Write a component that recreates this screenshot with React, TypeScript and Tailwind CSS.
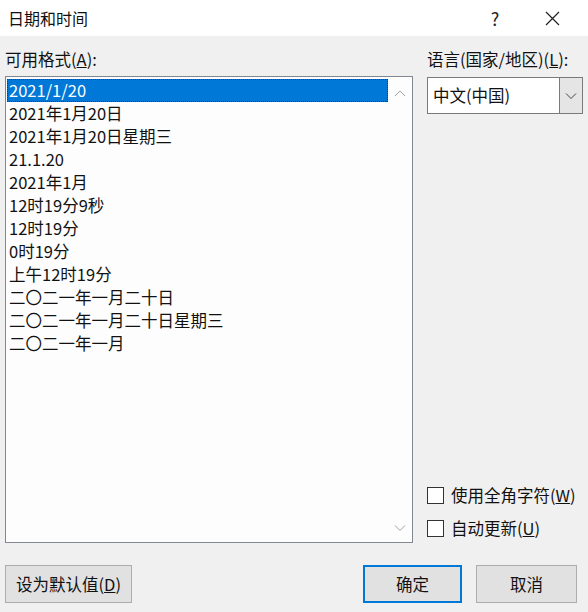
import React, { useState } from 'react';

const formats = [
  '2021/1/20',
  '2021年1月20日',
  '2021年1月20日星期三',
  '21.1.20',
  '2021年1月',
  '12时19分9秒',
  '12时19分',
  '0时19分',
  '上午12时19分',
  '二〇二一年一月二十日',
  '二〇二一年一月二十日星期三',
  '二〇二一年一月',
];

const Chevron: React.FC<{ up?: boolean; className?: string }> = ({ up, className }) => (
  <svg width="12" height="8" viewBox="0 0 12 8" className={className}>
    <path d={up ? 'M1 7 L6 2 L11 7' : 'M1 1.5 L6 6.5 L11 1.5'} fill="none" stroke="currentColor" strokeWidth="1" />
  </svg>
);

const Check: React.FC<{ label: string; keyChar: string }> = ({ label, keyChar }) => (
  <label className="flex items-center gap-[7px] h-[17px]">
    <span className="w-[17px] h-[17px] border border-[#333] bg-white shrink-0" />
    <span>
      {label}(<span className="underline">{keyChar}</span>)
    </span>
  </label>
);

const App: React.FC = () => {
  const [selected, setSelected] = useState(0);

  return (
    <div
      className="w-[588px] h-[612px] bg-[#f0f0f0] text-[16.5px] text-[#111] flex flex-col overflow-hidden"
      style={{ fontFamily: '"Noto Sans CJK SC", "Noto Sans", sans-serif' }}
    >
      {/* title bar */}
      <div className="h-[36px] bg-white flex items-center shrink-0">
        <span className="pl-[8px] flex-1 text-[16px] leading-[20px]">日期和时间</span>
        <span className="w-[62px] text-center text-[18px] text-[#222]">?</span>
        <span className="w-[62px] flex justify-center pr-[10px]">
          <svg width="15" height="15" viewBox="0 0 15 15">
            <path d="M1 1 L14 14 M14 1 L1 14" stroke="#222" strokeWidth="1.2" />
          </svg>
        </span>
      </div>

      <div className="flex px-[5px] pt-[12px] gap-[14px]">
        {/* formats */}
        <div className="w-[408px] flex flex-col">
          <div className="h-[28px] leading-[22px]">
            可用格式(<span className="underline">A</span>):
          </div>
          <div className="h-[467px] border border-[#828790] bg-[#fdfdfd] flex">
            <div className="flex-1 pl-[1px] pt-[2px]">
              {formats.map((f, i) => (
                <div
                  key={f}
                  onClick={() => setSelected(i)}
                  className={`h-[23px] leading-[23px] pl-[2px] whitespace-nowrap ${
                    i === selected ? 'bg-[#0078d7] text-white outline-1 outline-dotted outline-[#333] -outline-offset-1' : ''
                  }`}
                >
                  {f}
                </div>
              ))}
            </div>
            <div className="w-[24px] flex flex-col items-center justify-between pt-[12px] pb-[10px] text-[#a0a0a0]">
              <Chevron up />
              <Chevron />
            </div>
          </div>
        </div>

        {/* language */}
        <div className="flex-1 flex flex-col">
          <div className="h-[29px] leading-[22px] whitespace-nowrap">
            语言(国家/地区)(<span className="underline">L</span>):
          </div>
          <div className="h-[37px] border border-[#7a7a7a] bg-white flex">
            <div className="flex-1 pl-[5px] leading-[35px]">中文(中国)</div>
            <div className="w-[23px] bg-[#e5e5e5] border-l border-[#7a7a7a] flex items-center justify-center text-[#444]">
              <Chevron />
            </div>
          </div>
          <div className="flex-1" />
          <div className="flex flex-col gap-[16px] pb-[6px]">
            <Check label="使用全角字符" keyChar="W" />
            <Check label="自动更新" keyChar="U" />
          </div>
        </div>
      </div>

      {/* buttons */}
      <div className="flex px-[5px] pt-[22px]">
        <button className="w-[127px] h-[38px] border border-[#adadad] bg-[#e1e1e1]">
          设为默认值(<span className="underline">D</span>)
        </button>
        <div className="flex-1" />
        <button className="w-[99px] h-[38px] border-2 border-[#0078d7] bg-[#e1e1e1]">确定</button>
        <button className="w-[101px] h-[38px] ml-[14px] mr-[6px] border border-[#adadad] bg-[#e1e1e1]">取消</button>
      </div>
    </div>
  );
};

export default App;
